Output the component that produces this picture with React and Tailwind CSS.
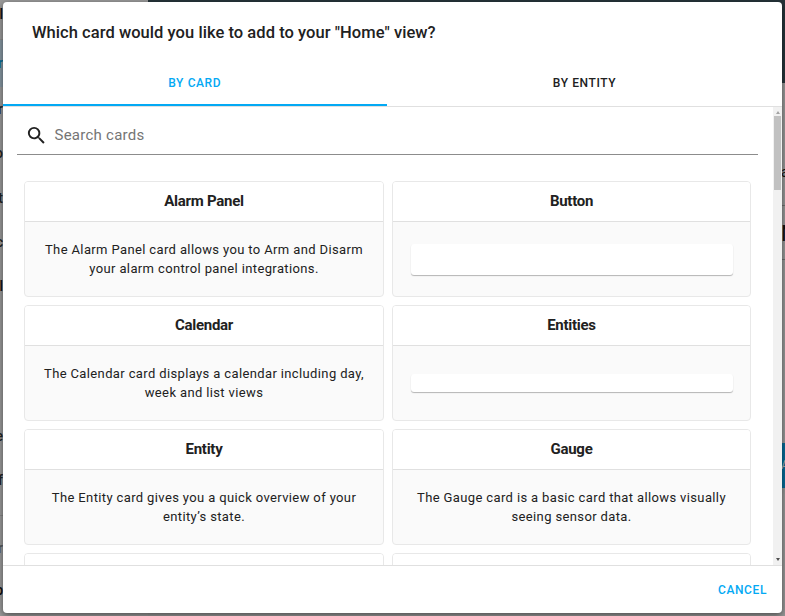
import React from "react";

const sidebarRows = [
  { text: "l", cls: "h-[40px] pb-[10px] text-[#111] border-b border-[#8c8c8c]" },
  { text: "r", cls: "h-[47px] text-[#066a96] bg-[#8595a0]" },
  { text: "r", cls: "h-[44px] text-[#222]" },
  { text: "o", cls: "h-[45px] text-[#222]" },
  { text: "t", cls: "h-[44px] text-[#222]" },
  { text: "c", cls: "h-[44px] text-[#222]" },
  { text: "l", cls: "h-[44px] text-[#111]" },
  { text: "", cls: "h-[106px]" },
  { text: "e", cls: "h-[44px] text-[#222]" },
  { text: "f", cls: "h-[44px] text-[#222]" },
  { text: "", cls: "h-[14px] border-b border-[#858585]" },
  { text: "r", cls: "h-[64px] text-[#555]" },
  { text: "p", cls: "h-[20px] text-[#111]" },
];

const cards = [
  { name: "Alarm Panel", lines: ["The Alarm Panel card allows you to Arm and Disarm", "your alarm control panel integrations."] },
  { name: "Button", preview: "h-[31px] mt-[1px]" },
  { name: "Calendar", lines: ["The Calendar card displays a calendar including day,", "week and list views"] },
  { name: "Entities", preview: "h-[18px]" },
  { name: "Entity", lines: ["The Entity card gives you a quick overview of your", "entity’s state."] },
  { name: "Gauge", lines: ["The Gauge card is a basic card that allows visually", "seeing sensor data."] },
  { name: "", lines: [] },
  { name: "", lines: [] },
];

function Backdrop() {
  return (
    <div className="absolute inset-0 flex bg-[#969696]">
      <div className="w-[148px] shrink-0 bg-[#999]">
        <div className="flex w-[3px] flex-col overflow-hidden">
          {sidebarRows.map((row, i) => (
            <div key={i} className={`flex shrink-0 items-center justify-end text-[14px] font-medium ${row.cls}`}>
              {row.text}
            </div>
          ))}
        </div>
      </div>
      <div className="flex grow flex-col">
        <div className="h-[83px] bg-[#26343a]" />
        <div className="flex w-full grow justify-end">
          <div className="flex w-[4px] flex-col overflow-hidden">
            <div className="mt-[79px] h-[20px] text-[14px] leading-[20px] text-[#111]">a</div>
            <div className="mt-[23px] h-[55px] border-y border-[#6f6f6f] text-[22px] leading-[55px] text-[#111]">N</div>
            <div className="mt-[183px] h-[45px] bg-[#066a96] text-[12px] leading-[45px] text-[#aaa] shadow-md">A</div>
          </div>
        </div>
      </div>
    </div>
  );
}

function Card({ name, lines, preview }) {
  return (
    <div className="flex h-[116px] flex-col overflow-hidden rounded-[4px] border border-[#e8e8e8] bg-[#fafafa]">
      <div className="h-[40px] shrink-0 border-b border-[#e0e0e0] bg-white text-center text-[15px] leading-[38px] font-bold tracking-[-0.27px]">
        {name}
      </div>
      <div className="flex grow flex-col items-center justify-center text-[13px] leading-[19px] tracking-[0.37px] whitespace-nowrap">
        {preview ? (
          <div className={`w-[322px] rounded-[3px] bg-white shadow-[0_1px_1px_rgba(0,0,0,0.28)] ${preview}`} />
        ) : (
          lines.map((line) => <div key={line}>{line}</div>)
        )}
      </div>
    </div>
  );
}

export default function App() {
  return (
    <div className="relative h-[616px] w-[785px] overflow-hidden font-['Roboto',sans-serif] text-[#212121]">
      <Backdrop />
      <div className="relative pt-[2px] pl-[2.5px]">
        <div className="flex h-[611px] w-[779.5px] flex-col overflow-hidden rounded-[4px] bg-white shadow-[0_2px_6px_rgba(0,0,0,0.5)]">
          <h1 className="h-[58px] shrink-0 pl-[29.5px] text-[16.5px] leading-[61px] font-medium tracking-[0.05px] whitespace-nowrap">
            Which card would you like to add to your "Home" view?
          </h1>
          <div className="flex h-[47px] shrink-0 border-b border-[#e0e0e0] text-center text-[12px] leading-[47px] font-medium tracking-[0.6px]">
            <div className="h-[46px] w-[384.5px] border-b-2 border-[#03a9f4] text-[#03a9f4]">BY CARD</div>
            <div className="grow">BY ENTITY</div>
          </div>
          <div className="flex h-[459px] shrink-0 border-b border-[#e0e0e0]">
            <div className="flex grow flex-col overflow-hidden pl-[14.5px]">
              <div className="flex h-[48px] w-[741px] shrink-0 items-center border-b border-[#8c8c8c] pt-[9px] pl-[7.5px]">
                <svg className="h-[23px] w-[23px]" viewBox="0 0 24 24" fill="currentColor">
                  <path d="M9.5,3A6.5,6.5 0 0,1 16,9.5C16,11.11 15.41,12.59 14.44,13.73L14.71,14H15.5L20.5,19L19,20.5L14,15.5V14.71L13.73,14.44C12.59,15.41 11.11,16 9.5,16A6.5,6.5 0 0,1 3,9.5A6.5,6.5 0 0,1 9.5,3M9.5,5C7,5 5,7 5,9.5C5,12 7,14 9.5,14C12,14 14,12 14,9.5C14,7 12,5 9.5,5Z" />
                </svg>
                <span className="pl-[7px] text-[15px] tracking-[0.25px] text-[#757575]">Search cards</span>
              </div>
              <div className="mt-[26px] ml-[7px] grid w-[727px] shrink-0 grid-cols-[360px_359px] gap-x-[8px] gap-y-[8px]">
                {cards.map((card, i) => (
                  <Card key={i} {...card} />
                ))}
              </div>
            </div>
            <div className="flex w-[9px] shrink-0 flex-col items-center bg-[#f1f1f1]">
              <div className="mt-[4px] h-0 w-0 border-x-[2.5px] border-b-[3px] border-x-transparent border-b-[#a3a3a3]" />
              <div className="mt-[2px] h-[74px] w-[7px] bg-[#c1c1c1]" />
              <div className="mt-auto mb-[4px] h-0 w-0 border-x-[2.5px] border-t-[3px] border-x-transparent border-t-[#505050]" />
            </div>
          </div>
          <div className="grow pr-[15px] text-right text-[12px] leading-[48px] font-medium tracking-[0.6px] text-[#03a9f4]">
            CANCEL
          </div>
        </div>
      </div>
    </div>
  );
}
